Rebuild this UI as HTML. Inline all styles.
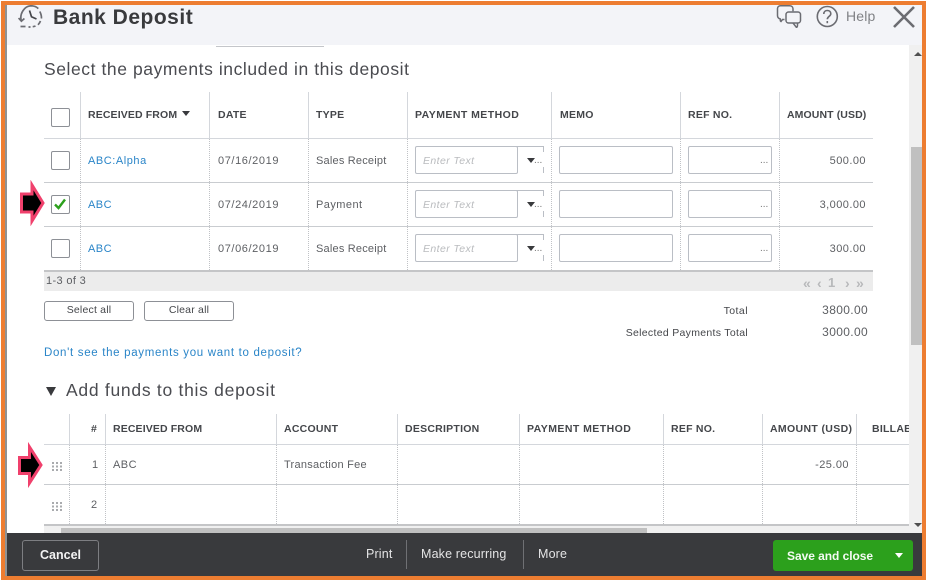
<!DOCTYPE html>
<html><head><meta charset="utf-8"><style>
html,body{margin:0;padding:0;background:#fff}
#p{position:relative;width:928px;height:581px;overflow:hidden;background:#fff;font-family:"Liberation Sans",sans-serif;color:#393a3d}
#p div,#p span.a{position:absolute;white-space:nowrap}
.t{font-size:11px;line-height:14px;color:#5d5f63;letter-spacing:.45px;transform:translateY(1px)}
.h{font-size:10.5px;line-height:14px;font-weight:bold;color:#44464a;letter-spacing:.25px;transform:translateY(1px)}
.l{color:#2a85c8}
.v{background:#d4d7dc;width:1px}
.d{width:0;border-left:1px dotted #c0c2c6}
.r{background:#c9ccd0;height:1px}
.cb{width:17px;height:17px;border:1px solid #8d9096;border-radius:2px;background:#fff}
.in{background:#fff;border:1px solid #babec5;border-radius:2px;height:26px;box-sizing:content-box}
.e{font-size:10.5px;font-style:italic;color:#b9bbbe;line-height:14px;letter-spacing:.4px;transform:translateY(1px)}
.btn{border:1px solid #8d9096;border-radius:3px;background:#fff;font-size:10.5px;text-align:center;color:#44464a;height:18px;line-height:17px;letter-spacing:.2px}
.f{color:#e4e4e5;font-size:12.5px;line-height:16px;letter-spacing:.15px;transform:translateY(1px)}
.pg{font-size:14px;line-height:14px;font-weight:bold;color:#b8b9bb}
</style></head><body><div id="p">
<!-- frame -->
<div style="left:5px;top:5px;width:917px;height:571px;background:#fff"></div>
<div style="left:5px;top:5px;width:2px;height:571px;background:#8f9294"></div>
<!-- header -->
<div style="left:7px;top:5px;width:915px;height:40px;background:#f3f4f8"></div>
<div style="left:216px;top:46px;width:108px;height:1px;background:#c4c6ca"></div>
<svg style="position:absolute;left:18px;top:5px" width="26" height="24" fill="none" stroke="#6b6c72" stroke-width="1.7"><path d="M3.200 15.500C1.500 8.500 6.500 1 13 .8c3 0 5.500 1 7.300 2.800"/><path d="M21.800 6.500c1.300 2.500 1.800 5 1.600 7M22.500 16c-.6 1.500-1.400 2.700-2.500 3.800M17.500 21c-1 .4-1.800.6-2.800.7M12.500 22h-2" /><path d="M.6 13l2.800 3.200 3-2.700M2.500 21.500h5"/><path d="M11.500 5.500l2 6.300 5 2.200" stroke="#45464b"/></svg>
<div style="left:53px;top:5px;font-size:21px;line-height:26px;font-weight:bold;color:#393a3d;letter-spacing:.5px">Bank Deposit</div>
<svg style="position:absolute;left:776px;top:4px" width="27" height="24" fill="none" stroke="#6b6c72" stroke-width="1.500"><path d="M8.500 15.500H6.500l-1.500 2c-.5-.2-.7-.5-.7-1v-1.500C2.500 14.500 1.500 13.500 1.500 11.500V4.500C1.500 2.800 2.800 1.800 4.500 1.800h9c2 0 3.500 1 3.500 3v2.500"/><rect x="10" y="8" width="14.500" height="11" rx="2.500"/><path d="M17 19l3.500 4.500c.7-.4 1-1 1-2V19"/></svg>
<svg style="position:absolute;left:816px;top:5px" width="23" height="23" fill="none" stroke="#6b6c72" stroke-width="1.600"><circle cx="11.300" cy="11.500" r="10"/><path d="M7.800 9c0-2.200 1.500-3.500 3.500-3.500s3.500 1.300 3.500 3.200c0 2.600-3.500 2.800-3.500 5.600"/><path d="M11.300 16v2.200"/></svg>
<div style="left:846px;top:8px;font-size:14px;line-height:17px;color:#808286;letter-spacing:.15px">Help</div>
<svg style="position:absolute;left:892px;top:5px" width="24" height="23" stroke="#6b6c72" stroke-width="2.600"><path d="M2 2l20 20M22 2L2 22"/></svg>

<div style="left:44px;top:58px;font-size:17.500px;line-height:22px;color:#4a4b50;letter-spacing:.57px">Select the payments included in this deposit</div>

<!-- table 1 grid -->
<div class="r" style="left:44px;top:138px;width:829px;height:1px;background:#d4d7dc"></div>
<div class="r" style="left:44px;top:182px;width:829px"></div>
<div class="r" style="left:44px;top:226px;width:829px"></div>
<div style="left:44px;top:270px;width:829px;height:2px;background:#c4c5c7"></div>
<div style="left:44px;top:272px;width:829px;height:19px;background:#ececec"></div>
<div class="v" style="left:80px;top:92px;height:46px"></div><div class="d" style="left:80px;top:139px;height:131px"></div>
<div class="v" style="left:209px;top:92px;height:46px"></div><div class="d" style="left:209px;top:139px;height:131px"></div>
<div class="v" style="left:308px;top:92px;height:46px"></div><div class="d" style="left:308px;top:139px;height:131px"></div>
<div class="v" style="left:407px;top:92px;height:46px"></div><div class="d" style="left:407px;top:139px;height:131px"></div>
<div class="v" style="left:551px;top:92px;height:46px"></div><div class="d" style="left:551px;top:139px;height:131px"></div>
<div class="v" style="left:680px;top:92px;height:46px"></div><div class="d" style="left:680px;top:139px;height:131px"></div>
<div class="v" style="left:779px;top:92px;height:46px"></div><div class="d" style="left:779px;top:139px;height:131px"></div>

<div class="cb" style="left:51px;top:108px"></div>
<div class="h" style="left:88px;top:107px;letter-spacing:.13px">RECEIVED FROM</div>
<div style="left:182px;top:111px;width:0;height:0;border-left:4px solid transparent;border-right:4px solid transparent;border-top:5px solid #393a3d"></div>
<div class="h" style="left:218px;top:107px">DATE</div>
<div class="h" style="left:316px;top:107px">TYPE</div>
<div class="h" style="left:415px;top:107px;letter-spacing:.45px">PAYMENT METHOD</div>
<div class="h" style="left:560px;top:107px">MEMO</div>
<div class="h" style="left:688px;top:107px">REF NO.</div>
<div class="h" style="left:787px;top:107px;letter-spacing:.1px">AMOUNT (USD)</div>

<!-- row 1 -->
<div class="cb" style="left:51px;top:151px"></div>
<div class="t l" style="left:88px;top:153px;letter-spacing:.55px">ABC:Alpha</div>
<div class="t" style="left:218px;top:153px;letter-spacing:.6px">07/16/2019</div>
<div class="t" style="left:316px;top:153px;letter-spacing:.2px">Sales Receipt</div>
<div class="in" style="left:415px;top:146px;width:101px"></div>
<div style="left:516px;top:146px;width:28px;height:27px;border-top:1px solid #babec5;box-sizing:border-box"></div>
<div style="left:543px;top:167px;width:1px;height:6px;background:#babec5"></div>
<div style="left:543px;top:146px;width:1px;height:6px;background:#babec5"></div>
<div class="e" style="left:423px;top:153px">Enter Text</div>
<div style="left:527px;top:158px;width:0;height:0;border-left:4px solid transparent;border-right:4px solid transparent;border-top:5px solid #393a3d"></div>
<div style="left:534px;top:154px;font-size:10px;line-height:14px;color:#777">...</div>
<div class="in" style="left:559px;top:146px;width:112px"></div>
<div class="in" style="left:688px;top:146px;width:82px"></div>
<div style="left:760px;top:154px;font-size:10px;line-height:14px;color:#777">...</div>
<div class="t" style="right:62px;top:153px">500.00</div>

<!-- row 2 -->
<div class="cb" style="left:51px;top:195px"></div>
<svg style="position:absolute;left:53px;top:197px" width="15" height="14" fill="none" stroke="#2ca01c" stroke-width="2.400"><path d="M2 7.500l3.500 3.500L12 2.500"/></svg>
<div class="t l" style="left:88px;top:197px">ABC</div>
<div class="t" style="left:218px;top:197px;letter-spacing:.6px">07/24/2019</div>
<div class="t" style="left:316px;top:197px">Payment</div>
<div class="in" style="left:415px;top:190px;width:101px"></div>
<div style="left:516px;top:190px;width:28px;height:27px;border-top:1px solid #babec5;box-sizing:border-box"></div>
<div style="left:543px;top:211px;width:1px;height:6px;background:#babec5"></div>
<div style="left:543px;top:190px;width:1px;height:6px;background:#babec5"></div>
<div class="e" style="left:423px;top:197px">Enter Text</div>
<div style="left:527px;top:202px;width:0;height:0;border-left:4px solid transparent;border-right:4px solid transparent;border-top:5px solid #393a3d"></div>
<div style="left:534px;top:198px;font-size:10px;line-height:14px;color:#777">...</div>
<div class="in" style="left:559px;top:190px;width:112px"></div>
<div class="in" style="left:688px;top:190px;width:82px"></div>
<div style="left:760px;top:198px;font-size:10px;line-height:14px;color:#777">...</div>
<div class="t" style="right:62px;top:197px">3,000.00</div>

<!-- row 3 -->
<div class="cb" style="left:51px;top:239px"></div>
<div class="t l" style="left:88px;top:241px">ABC</div>
<div class="t" style="left:218px;top:241px;letter-spacing:.6px">07/06/2019</div>
<div class="t" style="left:316px;top:241px;letter-spacing:.2px">Sales Receipt</div>
<div class="in" style="left:415px;top:234px;width:101px"></div>
<div style="left:516px;top:234px;width:28px;height:27px;border-top:1px solid #babec5;box-sizing:border-box"></div>
<div style="left:543px;top:255px;width:1px;height:6px;background:#babec5"></div>
<div style="left:543px;top:234px;width:1px;height:6px;background:#babec5"></div>
<div class="e" style="left:423px;top:241px">Enter Text</div>
<div style="left:527px;top:246px;width:0;height:0;border-left:4px solid transparent;border-right:4px solid transparent;border-top:5px solid #393a3d"></div>
<div style="left:534px;top:242px;font-size:10px;line-height:14px;color:#777">...</div>
<div class="in" style="left:559px;top:234px;width:112px"></div>
<div class="in" style="left:688px;top:234px;width:82px"></div>
<div style="left:760px;top:242px;font-size:10px;line-height:14px;color:#777">...</div>
<div class="t" style="right:62px;top:241px">300.00</div>

<!-- pagination -->
<div class="t" style="left:46px;top:273px;letter-spacing:.35px">1-3 of 3</div>
<div class="pg" style="left:803px;top:276px">«</div>
<div class="pg" style="left:817px;top:276px">‹</div>
<div class="pg" style="left:828px;top:276px;font-size:13px">1</div>
<div class="pg" style="left:845px;top:276px">›</div>
<div class="pg" style="left:856px;top:276px">»</div>

<div class="btn" style="left:44px;top:301px;width:88px">Select all</div>
<div class="btn" style="left:144px;top:301px;width:88px">Clear all</div>
<div class="t" style="right:180px;top:303px;color:#44464a;font-size:10.500px">Total</div>
<div class="t" style="right:180px;top:325px;color:#44464a;font-size:10.500px;letter-spacing:.3px">Selected Payments Total</div>
<div class="t" style="right:60px;top:302px;font-size:12px;letter-spacing:.35px">3800.00</div>
<div class="t" style="right:60px;top:324px;font-size:12px;letter-spacing:.35px">3000.00</div>
<div class="t l" style="left:44px;top:345px;font-size:11.500px;letter-spacing:.68px">Don't see the payments you want to deposit?</div>

<!-- section 2 -->
<div style="left:46px;top:387px;width:0;height:0;border-left:5px solid transparent;border-right:5px solid transparent;border-top:9px solid #393a3d"></div>
<div style="left:66px;top:379px;font-size:17.500px;line-height:22px;color:#4a4b50;letter-spacing:.72px">Add funds to this deposit</div>

<div class="r" style="left:44px;top:444px;width:865px;background:#d4d7dc"></div>
<div class="r" style="left:44px;top:484px;width:865px"></div>
<div style="left:44px;top:524px;width:865px;height:2px;background:#c4c5c7"></div>
<div class="v" style="left:69px;top:414px;height:30px"></div><div class="d" style="left:69px;top:445px;height:79px"></div>
<div class="v" style="left:105px;top:414px;height:30px"></div><div class="d" style="left:105px;top:445px;height:79px"></div>
<div class="v" style="left:276px;top:414px;height:30px"></div><div class="d" style="left:276px;top:445px;height:79px"></div>
<div class="v" style="left:397px;top:414px;height:30px"></div><div class="d" style="left:397px;top:445px;height:79px"></div>
<div class="v" style="left:519px;top:414px;height:30px"></div><div class="d" style="left:519px;top:445px;height:79px"></div>
<div class="v" style="left:663px;top:414px;height:30px"></div><div class="d" style="left:663px;top:445px;height:79px"></div>
<div class="v" style="left:762px;top:414px;height:30px"></div><div class="d" style="left:762px;top:445px;height:79px"></div>
<div class="v" style="left:856px;top:414px;height:30px"></div><div class="d" style="left:856px;top:445px;height:79px"></div>

<div class="h" style="left:91px;top:421px">#</div>
<div class="h" style="left:113px;top:421px;letter-spacing:.13px">RECEIVED FROM</div>
<div class="h" style="left:284px;top:421px">ACCOUNT</div>
<div class="h" style="left:405px;top:421px">DESCRIPTION</div>
<div class="h" style="left:527px;top:421px;letter-spacing:.45px">PAYMENT METHOD</div>
<div class="h" style="left:671px;top:421px">REF NO.</div>
<div class="h" style="left:770px;top:421px;letter-spacing:.35px">AMOUNT (USD)</div>
<div style="left:872px;top:414px;width:37px;height:30px;overflow:hidden"><div class="h" style="left:0;top:7px">BILLABLE</div></div>

<svg style="position:absolute;left:52px;top:462px" width="11" height="50" fill="#a9abae"><g id="g"><rect x="0" y="0" width="2" height="2"/><rect x="4" y="0" width="2" height="2"/><rect x="8" y="0" width="2" height="2"/><rect x="0" y="3.500" width="2" height="2"/><rect x="4" y="3.500" width="2" height="2"/><rect x="8" y="3.500" width="2" height="2"/><rect x="0" y="7" width="2" height="2"/><rect x="4" y="7" width="2" height="2"/><rect x="8" y="7" width="2" height="2"/></g><g transform="translate(0,40)"><rect x="0" y="0" width="2" height="2"/><rect x="4" y="0" width="2" height="2"/><rect x="8" y="0" width="2" height="2"/><rect x="0" y="3.500" width="2" height="2"/><rect x="4" y="3.500" width="2" height="2"/><rect x="8" y="3.500" width="2" height="2"/><rect x="0" y="7" width="2" height="2"/><rect x="4" y="7" width="2" height="2"/><rect x="8" y="7" width="2" height="2"/></g></svg>
<div class="t" style="left:92px;top:457px">1</div>
<div class="t" style="left:113px;top:457px">ABC</div>
<div class="t" style="left:284px;top:457px;letter-spacing:.25px">Transaction Fee</div>
<div class="t" style="right:79px;top:457px">-25.00</div>
<div class="t" style="left:91px;top:497px">2</div>

<!-- scrollbars -->
<div style="left:44px;top:526px;width:865px;height:7px;background:#f0f0f0"></div>
<div style="left:61px;top:528px;width:586px;height:5px;background:#c0c0c0"></div>
<div style="left:909px;top:45px;width:13px;height:488px;background:#f0f0f0"></div>
<div style="left:911px;top:147px;width:11px;height:198px;background:#c0c0c0"></div>
<div style="left:914px;top:52px;width:0;height:0;border-left:4px solid transparent;border-right:4px solid transparent;border-bottom:4px solid #505050"></div>
<div style="left:914px;top:523px;width:0;height:0;border-left:4px solid transparent;border-right:4px solid transparent;border-top:4px solid #505050"></div>

<!-- arrows -->
<svg style="position:absolute;left:18px;top:180px" width="30" height="46"><path d="M3.500 14H14V5L25 23L14 41V32H3.500Z" fill="#000" stroke="#f0406c" stroke-width="3"/></svg>
<svg style="position:absolute;left:16px;top:441px" width="30" height="48"><path d="M3.500 16.500H13.500V6L25 24L13.500 42V32.500H3.500Z" fill="#000" stroke="#f0406c" stroke-width="3"/></svg>

<!-- footer -->
<div style="left:7px;top:533px;width:915px;height:43px;background:#393a3d"></div>
<div style="left:22px;top:540px;width:75px;height:29px;border:1px solid #7d7e82;border-radius:3px;color:#f3f3f3;font-size:12.500px;font-weight:bold;text-align:center;line-height:29px">Cancel</div>
<div class="f" style="left:366px;top:545px">Print</div>
<div style="left:406px;top:540px;width:1px;height:29px;background:#6f7074"></div>
<div class="f" style="left:421px;top:545px">Make recurring</div>
<div style="left:523px;top:540px;width:1px;height:29px;background:#6f7074"></div>
<div class="f" style="left:538px;top:545px">More</div>
<div style="left:773px;top:540px;width:140px;height:31px;background:#2ca01c;border-radius:3px"></div>
<div style="left:787px;top:548px;color:#f4fbf3;font-size:12px;line-height:16px;font-weight:bold;letter-spacing:-.05px">Save and close</div>
<div style="left:895px;top:553px;width:0;height:0;border-left:4.500px solid transparent;border-right:4.500px solid transparent;border-top:5px solid #fff"></div>

<!-- orange border -->
<div style="left:1px;top:1px;width:925px;height:579px;border:4px solid #ed7d31;box-sizing:border-box"></div>
</div></body></html>
